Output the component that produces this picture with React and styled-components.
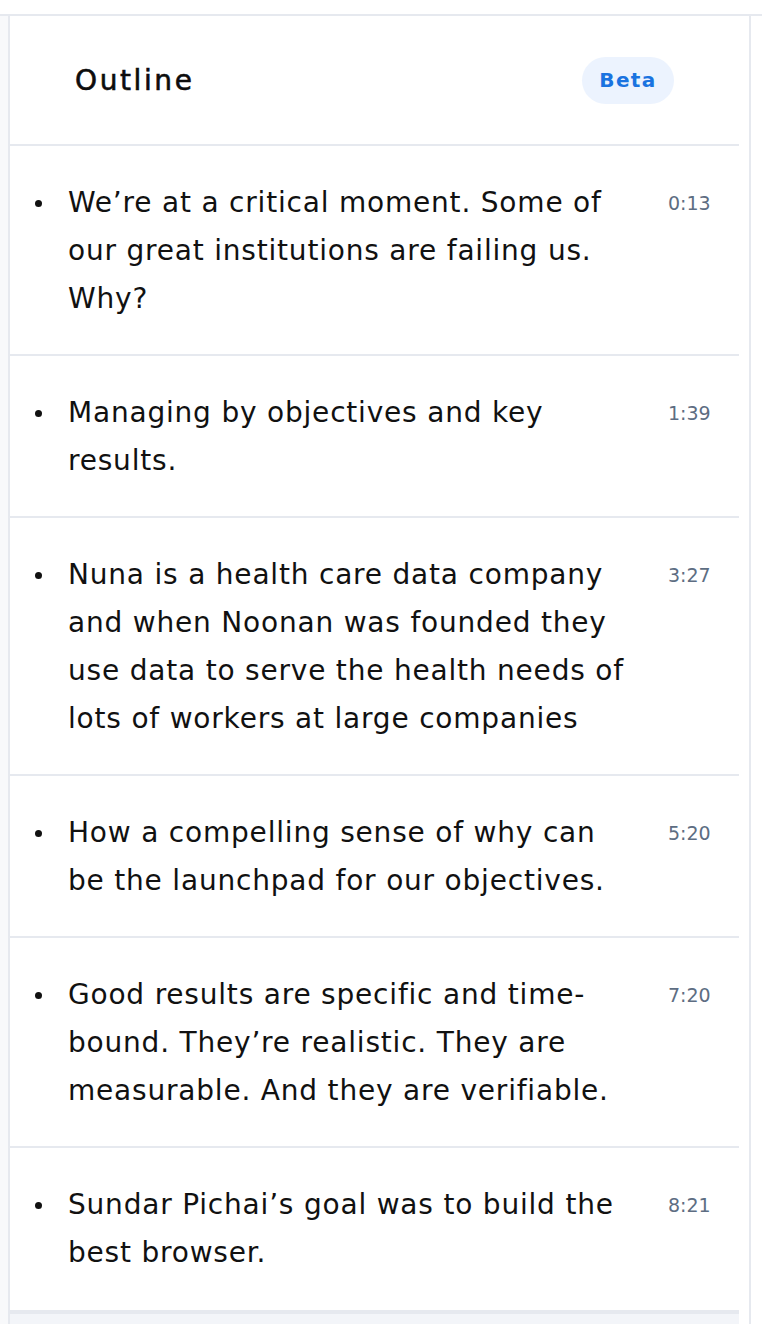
import React from "react";
import styled, { createGlobalStyle } from "styled-components";

const GlobalStyle = createGlobalStyle`
  body {
    margin: 0;
    background: #ffffff;
    font-family: "DejaVu Sans", "Noto Sans", sans-serif;
  }
`;

const Page = styled.div`
  padding-top: 14px;
`;

const Frame = styled.div`
  display: flex;
  min-height: calc(100vh - 16px);
  border-top: 2px solid #e6e9ef;
`;

const Gutter = styled.div`
  width: 8px;
  background: #f8f9fb;
`;

const Panel = styled.section`
  width: 743px;
  display: flex;
  border-left: 2px solid #e6e9ef;
  border-right: 2px solid #e6e9ef;
  box-sizing: border-box;
`;

const Content = styled.div`
  width: 729px;
  display: flex;
  flex-direction: column;
`;

const Header = styled.header`
  height: 128px;
  display: flex;
  align-items: center;
  justify-content: space-between;
  padding: 0 65px 0 65px;
  border-bottom: 2px solid #e6e9ef;
`;

const Title = styled.h2`
  margin: 0;
  font-size: 28px;
  font-weight: 400;
  letter-spacing: 2.6px;
  -webkit-text-stroke: 0.6px #0d0d0d;
  color: #0d0d0d;
`;

const Badge = styled.span`
  display: inline-flex;
  align-items: center;
  justify-content: center;
  width: 92px;
  height: 47px;
  border-radius: 24px;
  background: #ecf3fe;
  color: #1a73e0;
  font-size: 20px;
  font-weight: 700;
  letter-spacing: 1.4px;
`;

const List = styled.ul`
  margin: 0;
  padding: 0;
  list-style: none;
`;

const Item = styled.li`
  display: flex;
  align-items: flex-start;
  padding: 33px 0 31px 24px;
  border-bottom: 2px solid #e6e9ef;
  &:last-child {
    padding-bottom: 33px;
    border-bottom: 4px solid #e6e9ef;
  }
`;

const Dot = styled.span`
  flex: none;
  width: 34px;
  height: 48px;
  display: flex;
  align-items: center;
  &::before {
    content: "";
    width: 7px;
    height: 7px;
    margin-left: 1px;
    border-radius: 50%;
    background: #111;
  }
`;

const Text = styled.p`
  margin: 0;
  flex: 1;
  font-size: 28px;
  line-height: 48px;
  letter-spacing: 0.8px;
  color: #111;
  padding-right: 36px;
`;

const Time = styled.span`
  flex: none;
  width: 71px;
  font-size: 19px;
  line-height: 48px;
  color: #5d6d82;
`;

const Rest = styled.div`
  flex: 1;
  background: #f3f5f9;
`;

const items = [
  { text: "We’re at a critical moment. Some of our great institutions are failing us. Why?", time: "0:13" },
  { text: "Managing by objectives and key results.", time: "1:39" },
  { text: "Nuna is a health care data company and when Noonan was founded they use data to serve the health needs of lots of workers at large companies", time: "3:27" },
  { text: "How a compelling sense of why can be the launchpad for our objectives.", time: "5:20" },
  { text: "Good results are specific and time-bound. They’re realistic. They are measurable. And they are verifiable.", time: "7:20" },
  { text: "Sundar Pichai’s goal was to build the best browser.", time: "8:21" },
];

export default function App() {
  return (
    <Page>
      <GlobalStyle />
      <Frame>
        <Gutter />
        <Panel>
          <Content>
            <Header>
              <Title>Outline</Title>
              <Badge>Beta</Badge>
            </Header>
            <List>
              {items.map((item) => (
                <Item key={item.time}>
                  <Dot />
                  <Text>{item.text}</Text>
                  <Time>{item.time}</Time>
                </Item>
              ))}
            </List>
            <Rest />
          </Content>
        </Panel>
      </Frame>
    </Page>
  );
}
